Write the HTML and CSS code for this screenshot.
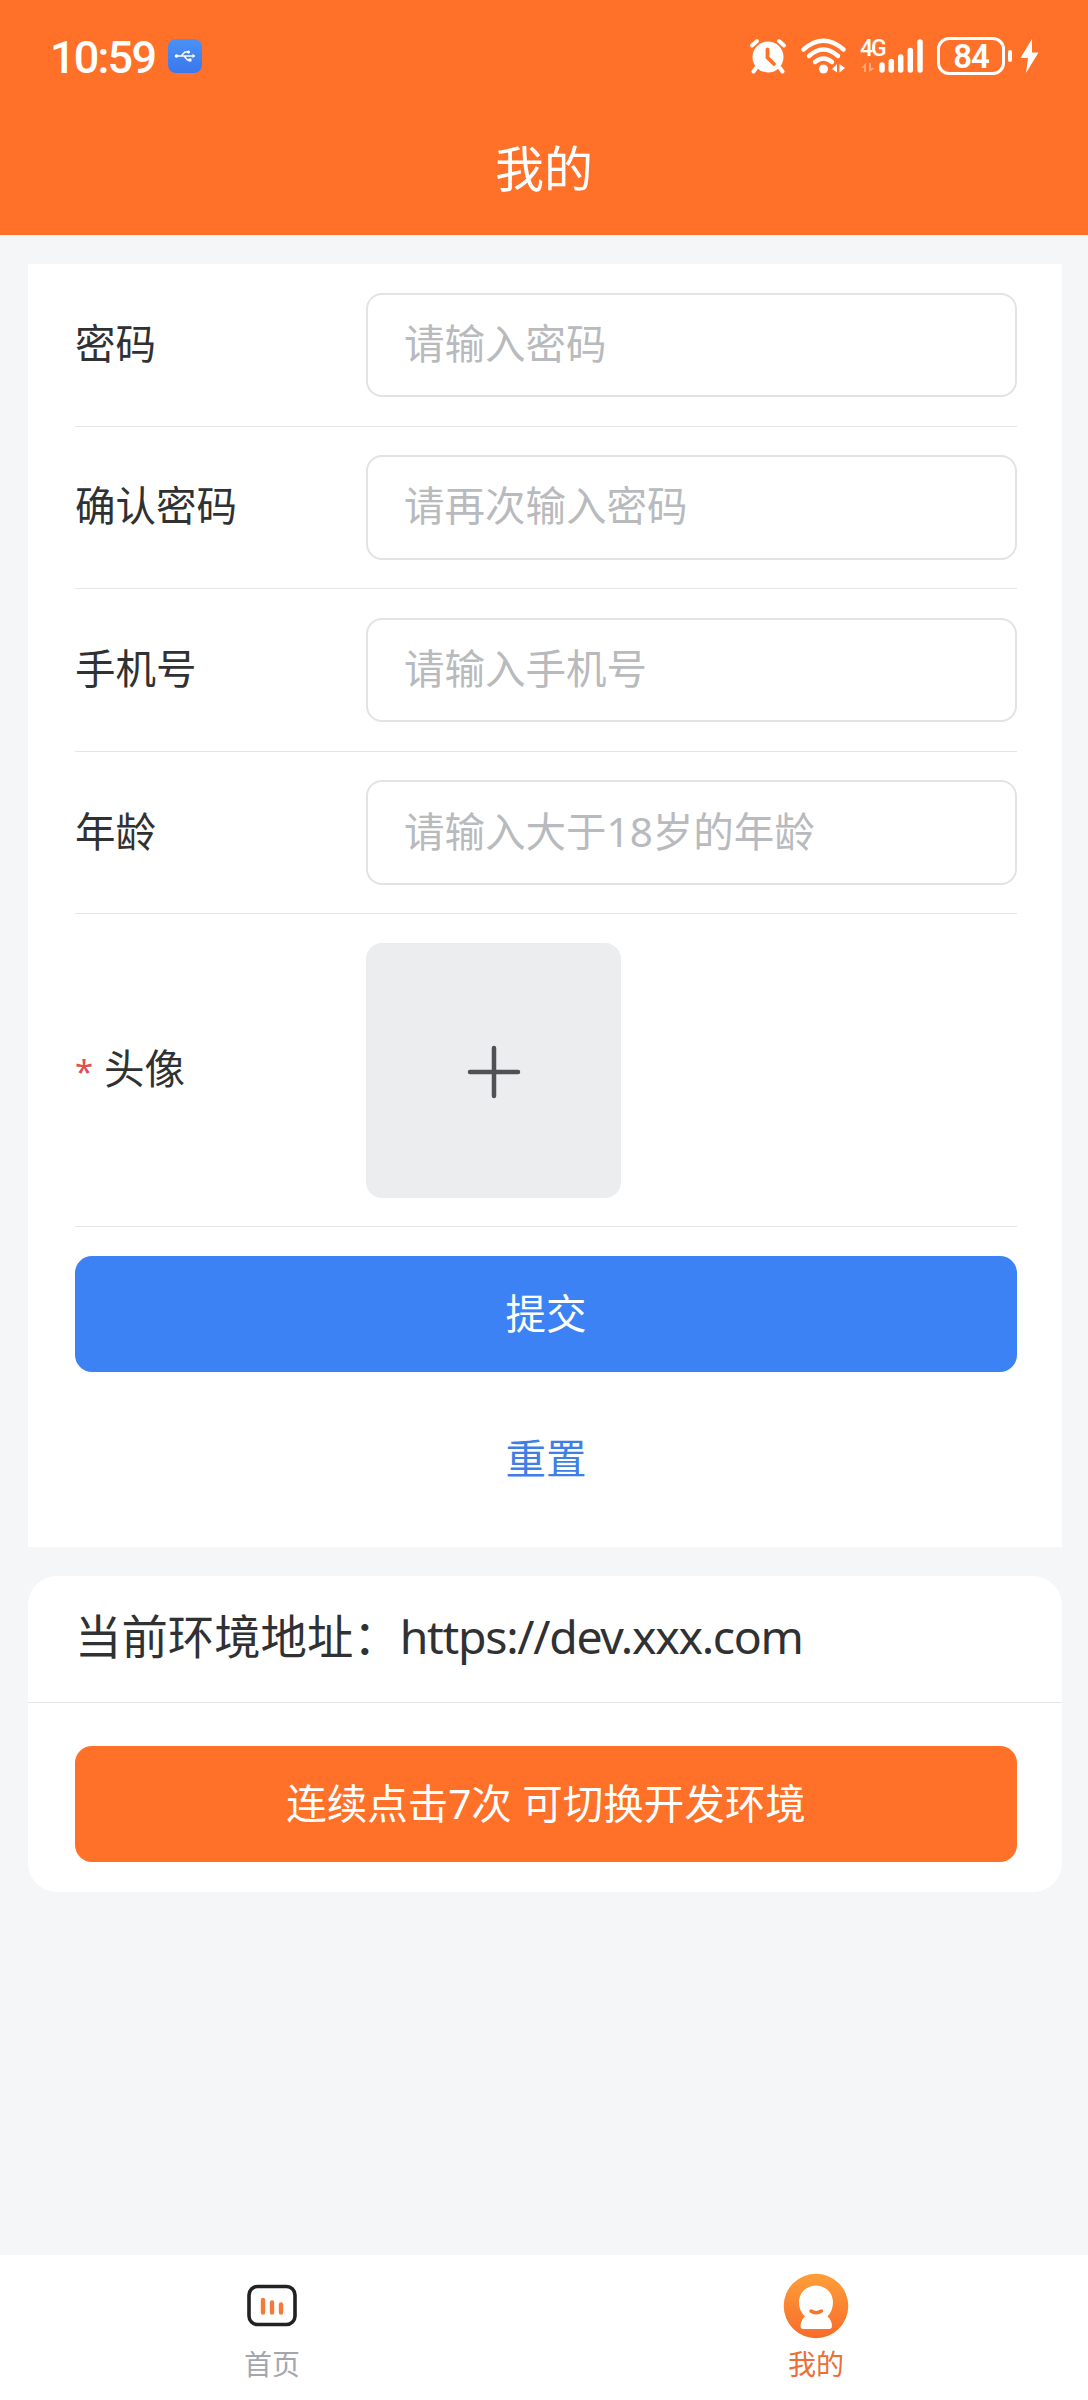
FILE: index.html
```html
<!DOCTYPE html>
<html lang="zh-CN">
<head>
  <meta charset="UTF-8">
  <meta name="viewport" content="width=device-width, initial-scale=1.0">
  <title>我的</title>
  <link rel="stylesheet" href="styles.css">
</head>
<body>
  <header class="header">
    <div class="status-bar">
      <span class="time">10:59</span>
      <span class="usb">
        <svg width="34" height="34" viewBox="0 0 34 34" fill="none" stroke="#fff" stroke-width="1.4">
          <path d="M8 17H26M13 17L17 13H20M16 17L19.500 21H22"/>
          <circle cx="8.500" cy="17" r="1.800" fill="#fff" stroke="none"/>
          <path d="M24.500 14.800L27.500 17L24.500 19.200Z" fill="#fff" stroke="none"/>
          <circle cx="20.500" cy="13" r="1.500" fill="#fff" stroke="none"/>
          <rect x="20.500" y="19.500" width="3" height="3" fill="#fff" stroke="none"/>
        </svg>
      </span>
      <div class="status-icons">
        <svg width="36" height="36" viewBox="0 0 36 36">
          <path d="M6 30L3.500 33.500M30 30L32.500 33.500" stroke="#fff" stroke-width="4" stroke-linecap="round"/>
          <path d="M2 7.500L7 3M34 7.500L29 3" stroke="#fff" stroke-width="3.800" stroke-linecap="round"/>
          <circle cx="18" cy="19" r="15.500" fill="#fff"/>
          <path d="M17.500 11.500V19.500L24 26" stroke="#ff7029" stroke-width="3.800" fill="none" stroke-linecap="round"/>
        </svg>
        <svg class="icon-wifi" width="45" height="36" viewBox="0 0 45 36" fill="none" stroke="#fff" stroke-width="4.400" stroke-linecap="round">
          <path d="M2.500 11.500Q22.500 -6 42.500 11.500"/>
          <path d="M8 18Q22.500 5 37 18"/>
          <path d="M14 24Q22.500 17 31 24"/>
          <circle cx="22.500" cy="31" r="4.500" fill="#fff" stroke="none"/>
          <path d="M31 31L36 26V34.500ZM38.500 26V34.500L44 30Z" fill="#fff" stroke="none"/>
        </svg>
        <div class="signal">
          <span class="net">4G</span>
          <svg width="64" height="36" viewBox="0 0 64 36">
            <path d="M1 30L6 25V34H4V30ZM9 25V34L15 30H11V25Z" fill="#fff" opacity=".4"/>
            <path d="M22 27V32M31.300 23.500V32M40.700 19V32M50.300 12.500V32M60 4V32" stroke="#fff" stroke-width="5.500" stroke-linecap="round"/>
          </svg>
        </div>
        <div class="battery">84</div>
        <span class="battery-cap"></span>
        <svg width="19" height="36" viewBox="0 0 19 36">
          <path d="M12 1L0.500 20H8L6 35L18.500 14.500H12Z" fill="#fff"/>
        </svg>
      </div>
    </div>
    <h1 class="title">我的</h1>
  </header>

  <main class="content">
    <form class="card form">
      <div class="row">
        <label class="label">密码</label>
        <input class="input" type="text" placeholder="请输入密码">
      </div>
      <div class="row">
        <label class="label">确认密码</label>
        <input class="input" type="text" placeholder="请再次输入密码">
      </div>
      <div class="row">
        <label class="label">手机号</label>
        <input class="input" type="text" placeholder="请输入手机号">
      </div>
      <div class="row">
        <label class="label">年龄</label>
        <input class="input" type="text" placeholder="请输入大于18岁的年龄">
      </div>
      <div class="row row-avatar">
        <label class="label"><span class="required">*</span>头像</label>
        <div class="upload">
          <svg width="54" height="54" viewBox="0 0 54 54" stroke="#515155" stroke-width="4.500" stroke-linecap="round">
            <path d="M3 27H51M27 3V51"/>
          </svg>
        </div>
      </div>
      <button class="btn btn-primary" type="button">提交</button>
      <button class="btn btn-text" type="button">重置</button>
    </form>

    <section class="card env">
      <div class="env-title">当前环境地址：<span class="url">https://dev.xxx.com</span></div>
      <button class="btn btn-orange" type="button">连续点击7次 可切换开发环境</button>
    </section>
  </main>

  <nav class="tabbar">
    <a class="tab">
      <svg class="tab-icon" width="66" height="66" viewBox="0 0 66 66">
        <rect x="10" y="13.500" width="46" height="38" rx="8.500" fill="none" stroke="#222" stroke-width="3.600"/>
        <path d="M24 27V39.500M33 29.500V39.500M42 31.500V39.500" stroke="#f5793b" stroke-width="4.400" stroke-linecap="round"/>
      </svg>
      <span>首页</span>
    </a>
    <a class="tab active">
      <svg class="tab-icon" width="66" height="66" viewBox="0 0 66 66">
        <defs>
          <linearGradient id="face" x1="0" y1="0" x2="0" y2="1">
            <stop offset="0" stop-color="#fd9f38"/>
            <stop offset="1" stop-color="#f86b2b"/>
          </linearGradient>
        </defs>
        <circle cx="33" cy="33" r="32.300" fill="url(#face)"/>
        <path d="M33 12.500C42.500 12.500 50 20 50 29C50 35 48 40 44.500 43.500C47.500 46 49 50 49 53Q49 56 46 56H20.500Q17.500 56 17.500 53C17.500 50 19 46 22 43.500C18 40 16 35 16 29C16 20 23.500 12.500 33 12.500Z" fill="#fff"/>
        <path d="M28 38Q33 41.500 38.500 38" stroke="#f5752d" stroke-width="3.400" fill="none" stroke-linecap="round"/>
      </svg>
      <span>我的</span>
    </a>
  </nav>
</body>
</html>
```

FILE: styles.css
```css
* {
  box-sizing: border-box;
}
body {
  margin: 0;
  height: 2400px;
  display: flex;
  flex-direction: column;
  font-family: "Noto Sans", "Noto Sans CJK SC", sans-serif;
  font-size: 40.5px;
  color: #303133;
  background: #f5f6f8;
}
.header {
  height: 235px;
  background: #ff7029;
  color: #fff;
}
.status-bar {
  display: flex;
  align-items: center;
  height: 112px;
  padding: 0 49px 0 50px;
}
.time {
  width: 118px;
  padding-top: 2px;
  font-family: Roboto, sans-serif;
  font-size: 45px;
  font-weight: 500;
  letter-spacing: -1.8px;
}
.usb {
  width: 34px;
  height: 34px;
  border-radius: 8px;
  background: linear-gradient(#4a92f5, #3a77ee);
}
.usb svg,
.status-icons svg {
  display: block;
}
.status-icons {
  display: flex;
  align-items: center;
  margin-left: auto;
}
.icon-wifi {
  margin-left: 15px;
}
.signal {
  position: relative;
  margin-left: 14px;
}
.net {
  position: absolute;
  left: 0;
  top: 0;
  font: 500 23px/21px Roboto, sans-serif;
  letter-spacing: -2px;
}
.battery {
  width: 68px;
  height: 38px;
  margin: 0 3px 0 13px;
  border: 3px solid #fff;
  border-radius: 12px;
  font: 600 33px/34px Roboto, sans-serif;
  letter-spacing: -1px;
  text-align: center;
}
.battery-cap {
  width: 4px;
  height: 12px;
  margin-right: 8px;
  border-radius: 2px;
  background: #fff;
}
.title {
  margin: 0;
  padding-top: 20px;
  font-size: 49px;
  font-weight: 400;
  line-height: 72px;
  text-align: center;
}
.content {
  flex: 1;
  padding: 29px 26px 0 28px;
}
.card {
  background: #fff;
}
.form {
  height: 1283px;
  padding: 0 45px 0 47px;
}
.row {
  display: flex;
  align-items: center;
  height: 162.6px;
  border-bottom: 1px solid #e4e5e7;
}
.label {
  width: 291px;
  line-height: 60px;
  padding-bottom: 2px;
}
.input {
  flex: 1;
  min-width: 0;
  height: 104.5px;
  padding: 0 36px 3px;
  border: 2px solid #e2e3e4;
  border-radius: 16px;
  background: #fff;
  font: inherit;
  outline: none;
}
.input::placeholder {
  color: #b8babd;
  opacity: 1;
}
.row-avatar {
  height: 313px;
}
.required {
  display: inline-block;
  width: 29px;
  font-size: 33px;
  line-height: 40px;
  color: #e34d4d;
}
.upload {
  display: flex;
  align-items: center;
  justify-content: center;
  width: 255px;
  height: 255px;
  padding-top: 4px;
  border-radius: 16px;
  background: #ecedef;
}
.btn {
  display: block;
  width: 100%;
  height: 116px;
  padding: 0 0 6px;
  border: none;
  border-radius: 17px;
  font: inherit;
  color: #fff;
}
.btn-primary {
  margin-top: 29px;
  background: #3c82f4;
}
.btn-text {
  margin-top: 29px;
  background: none;
  color: #3f7fe5;
}
.env {
  height: 316px;
  margin-top: 29px;
  border-radius: 29px;
}
.env-title {
  height: 127px;
  padding-left: 47px;
  border-bottom: 1px solid #e4e5e7;
  font-size: 46.4px;
  line-height: 121px;
  white-space: nowrap;
}
.url {
  letter-spacing: -1.3px;
}
.btn-orange {
  width: 942px;
  margin: 43px 0 0 47px;
  background: #ff7029;
}
.tabbar {
  display: flex;
  height: 145px;
  background: #fff;
}
.tab {
  flex: 1;
  display: flex;
  flex-direction: column;
  align-items: center;
  padding-top: 18px;
  font-size: 28px;
  line-height: 40px;
  color: #a3a6b0;
}
.tab-icon {
  margin-bottom: 5px;
}
.active {
  color: #ea6f38;
}
```
